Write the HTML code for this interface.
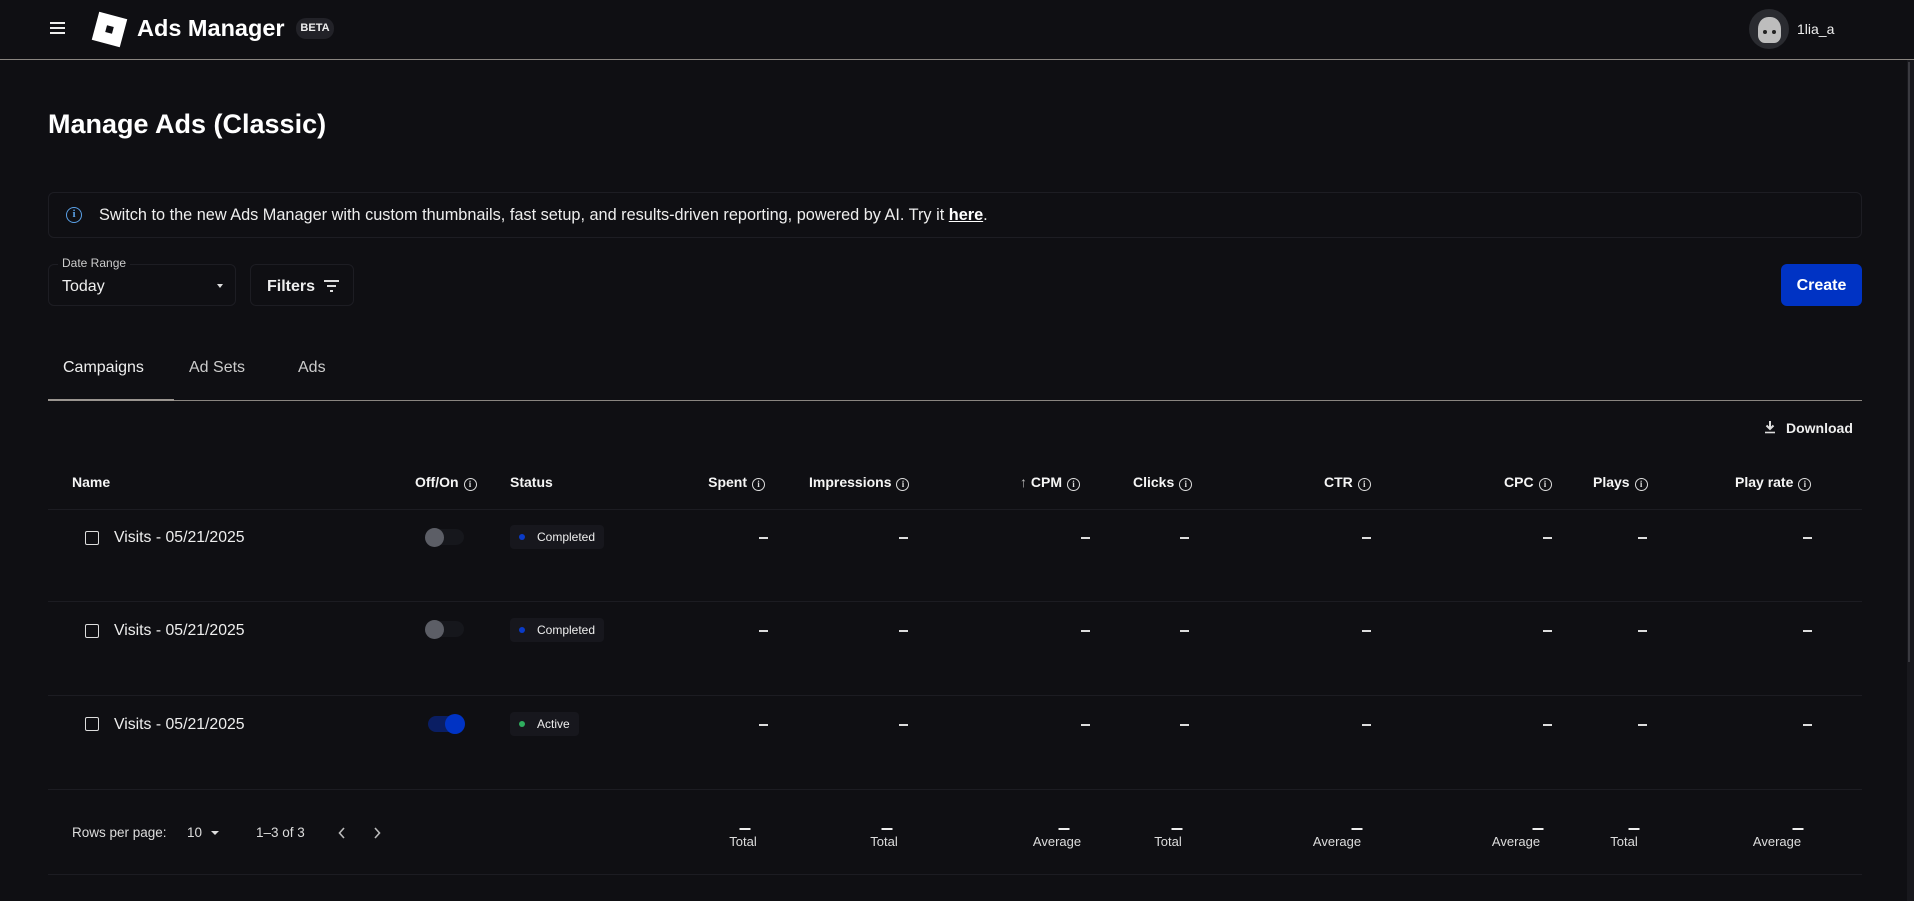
<!DOCTYPE html>
<html><head><meta charset="utf-8"><style>
*{margin:0;padding:0;box-sizing:border-box}
body{width:1914px;height:901px;background:#0f0f13;color:#f2f2f2;font-family:"Liberation Sans",sans-serif;position:relative;overflow:hidden}
.a{position:absolute;white-space:nowrap}
.hd{font-size:14px;font-weight:bold;color:#f5f5f5}
.ic{display:inline-block;width:13px;height:13px;border:1.3px solid #ddd;border-radius:50%;font-size:9px;line-height:11px;text-align:center;font-weight:bold;vertical-align:0px;margin-left:5px;color:#ddd;font-family:"Liberation Serif",serif}
.dash{position:absolute;width:9px;height:1.5px;background:#ddd}
.line{position:absolute;left:48px;width:1814px;height:1px;background:#1c1c22}
.ft{position:absolute;font-size:13px;color:#ddd;transform:translateX(-50%)}
.fd{position:absolute;width:11px;height:2px;background:#eee;transform:translateX(-50%)}
.cb{position:absolute;left:85px;width:14px;height:14px;border:1.6px solid #ddd;border-radius:2px}
.nm{position:absolute;left:114px;font-size:15.8px;color:#eee}
.pill{position:absolute;left:510px;height:24px;background:#17171d;border-radius:4px;font-size:12px;color:#eee;padding:0 9px 0 27px;line-height:24px}
.pill i{position:absolute;left:9px;top:9px;width:6px;height:6px;border-radius:50%}
</style></head><body>
<!-- header -->
<div class="a" style="left:50px;top:22px;width:15px;height:2px;background:#eee;box-shadow:0 5px 0 #eee,0 10px 0 #eee"></div>
<div class="a" style="left:95px;top:15px;width:29px;height:29px;background:#fff;transform:rotate(15deg)"><div style="position:absolute;left:11px;top:11px;width:7px;height:7px;background:#0f0f13"></div></div>
<div class="a" style="left:137px;top:15px;font-size:23.5px;font-weight:bold;color:#fff">Ads Manager</div>
<div class="a" style="left:296px;top:18px;width:38px;height:21px;border-radius:10px;background:#222228;font-size:11px;font-weight:bold;text-align:center;line-height:21px;color:#eee">BETA</div>
<div class="a" style="left:1749px;top:9px;width:40px;height:40px;border-radius:50%;background:#2a2b30;overflow:hidden"><div style="position:absolute;left:9px;top:8px;width:23px;height:26px;background:#bdbdbd;border-radius:45% 45% 30% 30%"></div><div style="position:absolute;left:14px;top:21px;width:4px;height:4px;background:#222;border-radius:50%;box-shadow:9px 0 0 #222"></div></div>
<div class="a" style="left:1797px;top:21px;font-size:14px;color:#eee">1lia_a</div>
<div class="a" style="left:0;top:59px;width:1914px;height:1px;background:#8a8580"></div>
<div class="a" style="left:1907px;top:60px;width:7px;height:841px;background:#18181d"></div>
<div class="a" style="left:1908px;top:62px;width:2px;height:600px;background:#3a3a40"></div>
<!-- title -->
<div class="a" style="left:48px;top:109px;font-size:27px;font-weight:bold;color:#fff">Manage Ads (Classic)</div>
<!-- banner -->
<div class="a" style="left:48px;top:192px;width:1814px;height:46px;border:1px solid #1d1d23;border-radius:6px;background:#0f0f13"></div>
<div class="a" style="left:66px;top:207px;width:16px;height:16px;border:1.5px solid #5aa0e6;border-radius:50%;color:#5aa0e6;font-size:11px;line-height:13px;text-align:center;font-weight:bold;font-family:'Liberation Serif',serif">i</div>
<div class="a" style="left:99px;top:206px;font-size:16.3px;color:#eee">Switch to the new Ads Manager with custom thumbnails, fast setup, and results-driven reporting, powered by AI. Try it <b style="text-decoration:underline;color:#fff">here</b>.</div>
<!-- controls -->
<div class="a" style="left:48px;top:264px;width:188px;height:42px;border:1px solid #1d1d23;border-radius:6px"></div>
<div class="a" style="left:58px;top:256px;font-size:12px;color:#ccc;background:#0f0f13;padding:0 4px">Date Range</div>
<div class="a" style="left:62px;top:278px;font-size:16px;color:#eee">Today</div>
<div class="a" style="left:217px;top:284px;border-left:3.5px solid transparent;border-right:3.5px solid transparent;border-top:4px solid #ddd"></div>
<div class="a" style="left:250px;top:264px;width:104px;height:42px;border:1px solid #1d1d23;border-radius:6px"></div>
<div class="a" style="left:267px;top:278px;font-size:16px;font-weight:bold;color:#eee">Filters</div>
<div class="a" style="left:324px;top:280px;width:15px;height:2px;background:#ddd"></div>
<div class="a" style="left:327px;top:285px;width:9px;height:2px;background:#ddd"></div>
<div class="a" style="left:330px;top:290px;width:3px;height:2px;background:#ddd"></div>
<div class="a" style="left:1781px;top:264px;width:81px;height:42px;border-radius:6px;background:#0033c4;color:#fff;font-size:16px;font-weight:bold;text-align:center;line-height:44px">Create</div>
<!-- tabs -->
<div class="a" style="left:63px;top:359px;font-size:16px;color:#eee">Campaigns</div>
<div class="a" style="left:189px;top:359px;font-size:16px;color:#ccc">Ad Sets</div>
<div class="a" style="left:298px;top:359px;font-size:16px;color:#ccc">Ads</div>
<div class="a" style="left:48px;top:400px;width:1814px;height:1px;background:#8a8580"></div>
<div class="a" style="left:48px;top:399px;width:126px;height:2px;background:#9a9590"></div>
<!-- download -->
<div class="a" style="left:1765px;top:420px;width:10px;height:14px">
<svg width="10" height="14" viewBox="0 0 10 14"><path d="M5 1v8M1.5 5.5L5 9l3.5-3.5" stroke="#ddd" stroke-width="2" fill="none"/><path d="M0 12.5h10" stroke="#ddd" stroke-width="1.6"/></svg></div>
<div class="a" style="left:1786px;top:420px;font-size:14px;font-weight:bold;color:#eee">Download</div>
<!-- table header -->
<div class="a hd" style="left:72px;top:474px">Name</div>
<div class="a hd" style="left:415px;top:474px">Off/On<span class="ic">i</span></div>
<div class="a hd" style="left:510px;top:474px">Status</div>
<div class="a hd" style="right:1149px;top:474px">Spent<span class="ic">i</span></div>
<div class="a hd" style="left:809px;top:474px">Impressions<span class="ic">i</span></div>
<div class="a hd" style="left:1020px;top:474px"><span style="color:#bbb;font-weight:normal">↑</span> CPM<span class="ic">i</span></div>
<div class="a hd" style="left:1133px;top:474px">Clicks<span class="ic">i</span></div>
<div class="a hd" style="left:1324px;top:474px">CTR<span class="ic">i</span></div>
<div class="a hd" style="left:1504px;top:474px">CPC<span class="ic">i</span></div>
<div class="a hd" style="left:1593px;top:474px">Plays<span class="ic">i</span></div>
<div class="a hd" style="left:1735px;top:474px">Play rate<span class="ic">i</span></div>
<div class="line" style="top:509px"></div>
<div class="line" style="top:601px"></div>
<div class="line" style="top:695px"></div>
<div class="line" style="top:789px"></div>
<div class="line" style="top:874px"></div>
<!-- rows -->
<div class="cb" style="top:531px"></div><div class="nm" style="top:529px">Visits - 05/21/2025</div>
<div class="cb" style="top:624px"></div><div class="nm" style="top:622px">Visits - 05/21/2025</div>
<div class="cb" style="top:717px"></div><div class="nm" style="top:716px">Visits - 05/21/2025</div>
<div class="a" style="left:427px;top:529px;width:37px;height:16px;border-radius:8px;background:#16171c"></div>
<div class="a" style="left:425px;top:528px;width:19px;height:19px;border-radius:50%;background:#5c5e66"></div>
<div class="a" style="left:427px;top:621px;width:37px;height:16px;border-radius:8px;background:#16171c"></div>
<div class="a" style="left:425px;top:620px;width:19px;height:19px;border-radius:50%;background:#5c5e66"></div>
<div class="a" style="left:428px;top:716px;width:34px;height:16px;border-radius:8px;background:#0a1e63"></div>
<div class="a" style="left:445px;top:714px;width:20px;height:20px;border-radius:50%;background:#0033c4"></div>
<div class="pill" style="top:525px"><i style="background:#0a3bc8"></i>Completed</div>
<div class="pill" style="top:618px"><i style="background:#0a3bc8"></i>Completed</div>
<div class="pill" style="top:712px"><i style="background:#2fae5f"></i>Active</div>
<div id="dashes"></div>
<!-- footer -->
<div class="a" style="left:72px;top:825px;font-size:13.5px;color:#ddd">Rows per page:</div>
<div class="a" style="left:187px;top:825px;font-size:13.5px;color:#ddd">10</div>
<div class="a" style="left:211px;top:831px;border-left:4px solid transparent;border-right:4px solid transparent;border-top:4px solid #ddd"></div>
<div class="a" style="left:256px;top:825px;font-size:13.5px;color:#ddd">1–3 of 3</div>
<svg class="a" style="left:337px;top:826px" width="10" height="14" viewBox="0 0 10 14"><path d="M7 2L2.5 7 7 12" stroke="#bbb" stroke-width="1.6" fill="none"/></svg>
<svg class="a" style="left:372px;top:826px" width="10" height="14" viewBox="0 0 10 14"><path d="M3 2l4.5 5L3 12" stroke="#bbb" stroke-width="1.6" fill="none"/></svg>
<script>
var xs=[763,903,1085,1184,1366,1547,1642,1807],ys=[537,630,724],h='';
ys.forEach(function(y){xs.forEach(function(x){h+='<div class="dash" style="left:'+(x-4)+'px;top:'+y+'px"></div>'})});
var f=[[743,'Total'],[884,'Total'],[1057,'Average'],[1168,'Total'],[1337,'Average'],[1516,'Average'],[1624,'Total'],[1777,'Average']];
var fx=[745,887,1064,1177,1357,1538,1634,1798];
f.forEach(function(e,i){h+='<div class="fd" style="left:'+fx[i]+'px;top:828px"></div><div class="ft" style="left:'+e[0]+'px;top:834px">'+e[1]+'</div>'});
document.getElementById('dashes').innerHTML=h;
</script>
</body></html>
